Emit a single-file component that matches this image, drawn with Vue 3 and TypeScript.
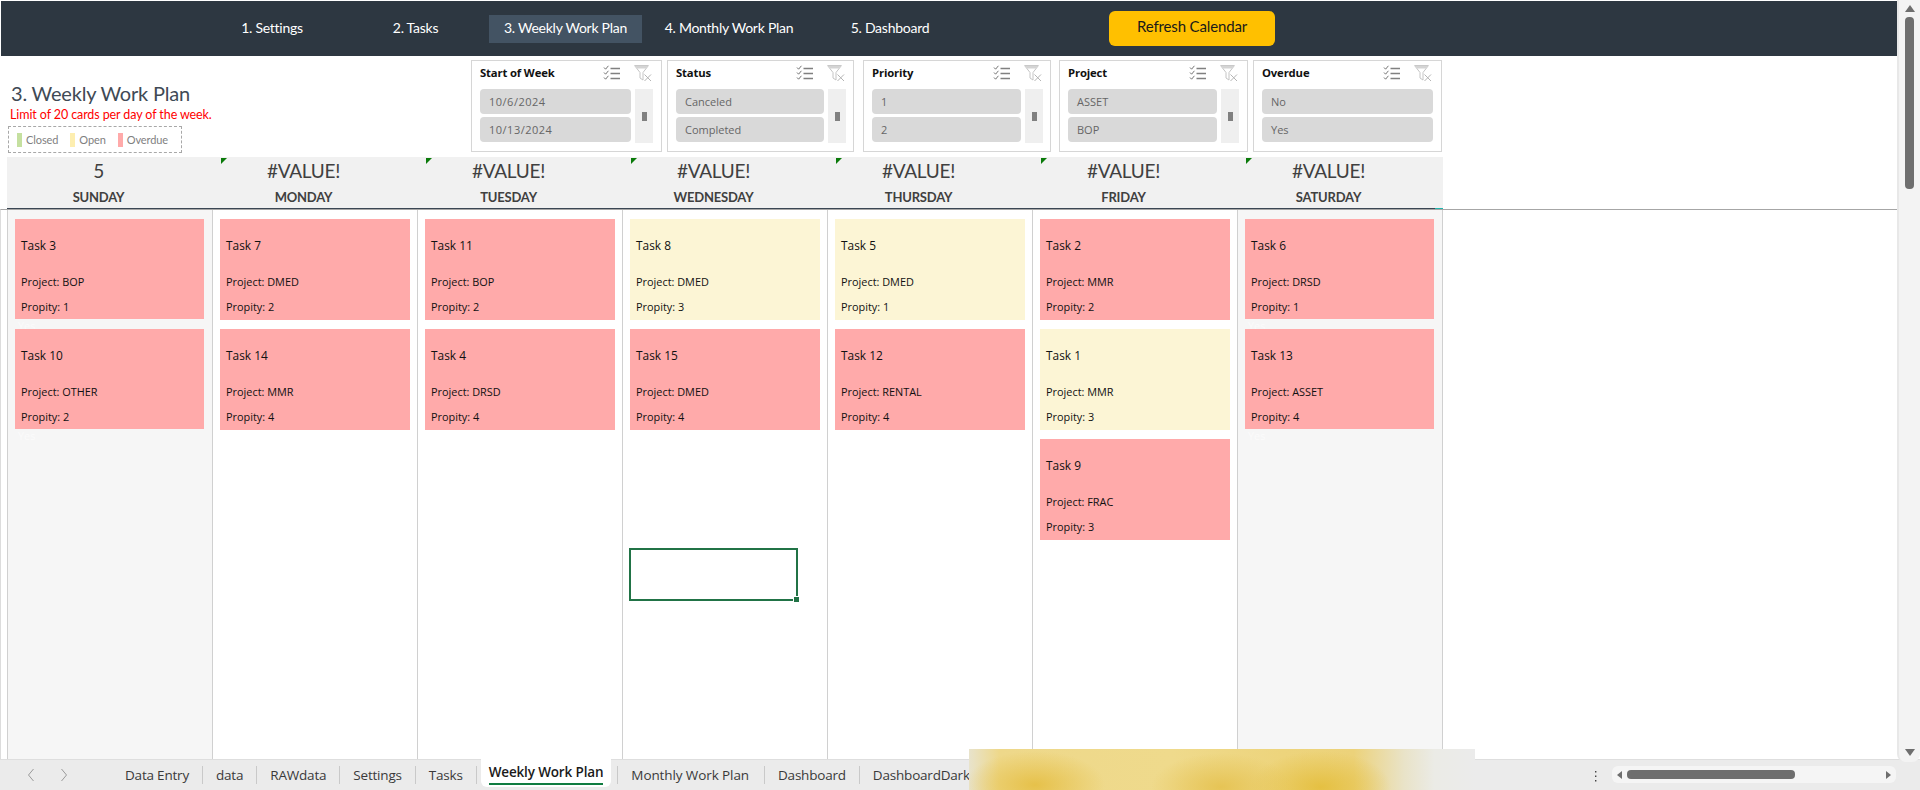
<template>
  <div class="app">
    <div class="main">
      <div class="sheet">
        <!-- nav bar -->
        <nav class="nav">
          <span></span>
          <a v-for="item in navItems" :key="item" class="nav-item" :class="{ active: item === activeNav }">{{ item }}</a>
          <span></span>
          <button class="refresh">Refresh Calendar</button>
        </nav>

        <!-- title and slicers -->
        <div class="top">
          <div class="title-block">
            <h1 class="title">3. Weekly Work Plan</h1>
            <p class="limit">Limit of 20 cards per day of the week.</p>
            <div class="legend">
              <span v-for="l in legend" :key="l.label" class="legend-item">
                <i class="swatch" :class="l.cls"></i>{{ l.label }}
              </span>
            </div>
          </div>
          <div class="filters">
            <div v-for="f in filters" :key="f.title" class="filter">
              <div class="filter-head">
                <span class="filter-title">{{ f.title }}</span>
                <svg class="ico-list" width="18" height="16" viewBox="0 0 18 16" fill="none">
                  <path d="M1 2.5 L2.6 4.2 L5.4 0.8 M1 7.5 L2.6 9.2 L5.4 5.8 M1 12.5 L2.6 14.2 L5.4 10.8" stroke="#666" stroke-width="0.9" />
                  <path d="M7.5 3.5 H17 M7.5 8.5 H17 M7.5 13.5 H17" stroke="#808080" stroke-width="1.3" />
                </svg>
                <svg class="ico-clear" width="18" height="17" viewBox="0 0 18 17" fill="none">
                  <path d="M0.6 0.6 H14.4 L9 7.5 V15 L6 13 V7.5 Z" stroke="#c4c4c4" stroke-width="1" fill="#fff" />
                  <path d="M1 1 H14 L12 3.6 H3 Z" fill="#d4d4d4" />
                  <path d="M10.5 9.5 L17 16 M17 9.5 L10.5 16" stroke="#b4b4b4" stroke-width="1" />
                </svg>
              </div>
              <div class="filter-body">
                <div class="filter-items">
                  <div v-for="o in f.options" :key="o" class="option">{{ o }}</div>
                </div>
                <div v-if="f.scroll" class="filter-scroll"><i></i></div>
              </div>
            </div>
          </div>
        </div>

        <!-- day headers -->
        <div class="days">
          <div v-for="(d, i) in days" :key="d.name" class="day-head">
            <i v-if="i > 0" class="corner"></i>
            <div class="day-num">{{ d.num }}</div>
            <div class="day-name">{{ d.name }}</div>
          </div>
          <i class="teal"></i>
        </div>

        <!-- board -->
        <div class="board-wrap">
          <div class="board">
            <div v-for="d in days" :key="d.name" class="col" :class="{ weekend: d.weekend }">
              <div v-for="c in d.cards" :key="c.task" class="card" :class="c.open ? 'open' : 'overdue'">
                <div class="card-title">{{ c.task }}</div>
                <div class="card-project">Project: {{ c.project }}</div>
                <div class="card-prio">Propity: {{ c.prio }}</div>
                <span v-if="d.weekend" class="ghost">Yes</span>
              </div>
            </div>
          </div>
          <div class="selection"><i></i></div>
        </div>
      </div>

      <!-- vertical scrollbar -->
      <div class="vscroll">
        <i class="arrow-up"></i>
        <div class="vthumb"></div>
        <i class="arrow-down"></i>
      </div>
    </div>

    <!-- sheet tabs -->
    <div class="tabs">
      <div class="tab-nav">
        <svg width="8" height="14" viewBox="0 0 8 14" fill="none"><path d="M6.5 1 L1.5 7 L6.5 13" stroke="#9a9a9a" /></svg>
        <svg width="8" height="14" viewBox="0 0 8 14" fill="none"><path d="M1.5 1 L6.5 7 L1.5 13" stroke="#9a9a9a" /></svg>
      </div>
      <div v-for="t in tabs" :key="t" class="tab" :class="{ current: t === activeTab }">
        <span>{{ t }}</span>
      </div>
      <div class="tab-spacer"></div>
      <svg class="dots" width="3" height="11" viewBox="0 0 3 11"><path d="M1 0h1.4v1.6H1zM1 4.5h1.4v1.6H1zM1 9h1.4v1.6H1z" fill="#444" /></svg>
      <div class="hscroll">
        <i class="arrow-left"></i>
        <div class="hthumb"></div>
        <i class="arrow-right"></i>
      </div>
    </div>

    <!-- blurred out part of the status bar -->
    <div class="smudge"></div>
  </div>
</template>

<script setup lang="ts">
interface Card {
  task: string
  project: string
  prio: number
  open?: boolean
}

interface Day {
  name: string
  num: string
  weekend?: boolean
  cards: Card[]
}

const activeNav = '3. Weekly Work Plan'
const navItems = ['1. Settings', '2. Tasks', '3. Weekly Work Plan', '4. Monthly Work Plan', '5. Dashboard']

const legend = [
  { label: 'Closed', cls: 'closed' },
  { label: 'Open', cls: 'open' },
  { label: 'Overdue', cls: 'late' }
]

const filters = [
  { title: 'Start of Week', options: ['10/6/2024', '10/13/2024'], scroll: true },
  { title: 'Status', options: ['Canceled', 'Completed'], scroll: true },
  { title: 'Priority', options: ['1', '2'], scroll: true },
  { title: 'Project', options: ['ASSET', 'BOP'], scroll: true },
  { title: 'Overdue', options: ['No', 'Yes'], scroll: false }
]

const days: Day[] = [
  {
    name: 'SUNDAY', num: '5', weekend: true,
    cards: [
      { task: 'Task 3', project: 'BOP', prio: 1 },
      { task: 'Task 10', project: 'OTHER', prio: 2 }
    ]
  },
  {
    name: 'MONDAY', num: '#VALUE!',
    cards: [
      { task: 'Task 7', project: 'DMED', prio: 2 },
      { task: 'Task 14', project: 'MMR', prio: 4 }
    ]
  },
  {
    name: 'TUESDAY', num: '#VALUE!',
    cards: [
      { task: 'Task 11', project: 'BOP', prio: 2 },
      { task: 'Task 4', project: 'DRSD', prio: 4 }
    ]
  },
  {
    name: 'WEDNESDAY', num: '#VALUE!',
    cards: [
      { task: 'Task 8', project: 'DMED', prio: 3, open: true },
      { task: 'Task 15', project: 'DMED', prio: 4 }
    ]
  },
  {
    name: 'THURSDAY', num: '#VALUE!',
    cards: [
      { task: 'Task 5', project: 'DMED', prio: 1, open: true },
      { task: 'Task 12', project: 'RENTAL', prio: 4 }
    ]
  },
  {
    name: 'FRIDAY', num: '#VALUE!',
    cards: [
      { task: 'Task 2', project: 'MMR', prio: 2 },
      { task: 'Task 1', project: 'MMR', prio: 3, open: true },
      { task: 'Task 9', project: 'FRAC', prio: 3 }
    ]
  },
  {
    name: 'SATURDAY', num: '#VALUE!', weekend: true,
    cards: [
      { task: 'Task 6', project: 'DRSD', prio: 1 },
      { task: 'Task 13', project: 'ASSET', prio: 4 }
    ]
  }
]

const activeTab = 'Weekly Work Plan'
const tabs = ['Data Entry', 'data', 'RAWdata', 'Settings', 'Tasks', 'Weekly Work Plan', 'Monthly Work Plan', 'Dashboard', 'DashboardDark']
</script>

<style>
html, body {
  margin: 0;
  overflow: hidden;
  background: #fff;
}
</style>

<style scoped>
.app {
  position: relative;
  width: 1920px;
  height: 790px;
  overflow: hidden;
  display: flex;
  flex-direction: column;
  font-family: Lato, "Open Sans", sans-serif;
}

.main {
  display: flex;
  height: 759px;
}

.sheet {
  width: 1897px;
  padding-top: 1px;
  box-sizing: border-box;
  display: flex;
  flex-direction: column;
  background: #fff;
}

/* nav */
.nav {
  height: 55px;
  margin-left: 1px;
  background: #2d3741;
  display: grid;
  grid-template-columns: 201px 140px 147px 153px 174px 148px 145px 166px;
  align-items: center;
}

.nav-item {
  height: 28px;
  line-height: 26px;
  margin-top: 1px;
  text-align: center;
  color: #fff;
  font-size: 14px;
  letter-spacing: -0.25px;
}

.nav-item.active {
  background: #435363;
}

.refresh {
  height: 35px;
  margin-top: -1px;
  border: none;
  border-radius: 6px;
  background: #ffc000;
  color: #1a1a1a;
  font-family: inherit;
  font-size: 15px;
  letter-spacing: -0.15px;
  padding: 0 0 4px;
}

/* title and slicers */
.top {
  display: flex;
  height: 101px;
}

.title-block {
  width: 471px;
  box-sizing: border-box;
  padding: 25px 0 0 8px;
}

.title {
  margin: 0 0 0 3px;
  font-weight: 400;
  font-size: 20px;
  line-height: 24px;
  color: #404a55;
  letter-spacing: -0.2px;
}

.limit {
  margin: 3px 0 0 2px;
  font-size: 12.5px;
  line-height: 14px;
  color: #ff0000;
  letter-spacing: -0.1px;
}

.legend {
  width: 174px;
  height: 27px;
  box-sizing: border-box;
  margin-top: 4px;
  border: 1px dashed #a8a8a8;
  display: flex;
  align-items: center;
  padding-left: 8px;
  font-size: 11px;
  color: #7f7f7f;
  letter-spacing: -0.1px;
}

.legend-item {
  display: flex;
  align-items: center;
  margin-right: 12px;
}

.swatch {
  width: 5px;
  height: 14px;
  margin-right: 4px;
}

.swatch.closed { background: #c5e0a0; }
.swatch.open { background: #fdeeb0; }
.swatch.late { background: #ffaaaa; }

.filters {
  display: flex;
  padding-top: 4px;
  height: 92px;
}

.filter {
  width: 191px;
  height: 92px;
  box-sizing: border-box;
  border: 1px solid #d6d6d6;
  padding: 0 8px;
  margin-right: 5px;
  font-family: "Open Sans", sans-serif;
}

.filter:nth-child(2) { width: 187px; margin-right: 9px; padding-right: 7px; }
.filter:nth-child(3) { width: 188px; margin-right: 8px; padding-right: 7px; }
.filter:nth-child(4) { width: 189px; margin-right: 5px; }
.filter:nth-child(5) { width: 189px; margin-right: 0; }

.filter:nth-child(1) .option {
  letter-spacing: 0.5px;
}

.filter-head {
  height: 23px;
  margin-bottom: 5px;
  display: flex;
  align-items: center;
}

.filter-title {
  flex: 1;
  font-size: 11.3px;
  font-weight: 700;
  color: #111;
  letter-spacing: -0.15px;
}

.ico-list {
  margin-right: 13px;
}

.ico-clear {
  margin-right: 1px;
  margin-top: 2px;
}

.filter-body {
  display: flex;
  gap: 4px;
}

.filter-items {
  flex: 1;
  display: flex;
  flex-direction: column;
  gap: 3px;
}

.option {
  height: 25px;
  line-height: 26px;
  border-radius: 4px;
  background: #d9d9d9;
  color: #666;
  font-size: 11px;
  padding-left: 9px;
}

.filter-scroll {
  width: 18px;
  height: 54px;
  background: #efefef;
  display: flex;
  align-items: center;
  justify-content: center;
}

.filter-scroll i {
  display: block;
  width: 5px;
  height: 9px;
  background: #808080;
}

/* day headers */
.days {
  position: relative;
  display: grid;
  grid-template-columns: repeat(7, 205px);
  width: 1436px;
  height: 52px;
  margin-left: 7px;
  background: #f1f1f1;
  border-bottom: 1px solid #3b4754;
  box-sizing: border-box;
}

.day-head {
  position: relative;
  padding-right: 22px;
  text-align: center;
  color: #404040;
}

.day-num {
  font-size: 19px;
  line-height: 24px;
  margin-top: 2px;
  letter-spacing: -0.3px;
}

.day-name {
  font-size: 13px;
  font-weight: 700;
  line-height: 16px;
  margin-top: 6px;
  letter-spacing: -0.2px;
}

.corner {
  position: absolute;
  left: 9px;
  top: 1px;
  width: 0;
  height: 0;
  border-top: 6px solid #0a7a0a;
  border-right: 6px solid transparent;
}

.teal {
  position: absolute;
  right: 0;
  bottom: -1px;
  width: 8px;
  height: 1px;
  background: #1fb5ad;
}

/* board */
.board-wrap {
  position: relative;
  flex: 1;
  min-height: 0;
  border-top: 1px solid #a6a6a6;
  border-left: 1px solid #dcdcdc;
}

.board {
  display: grid;
  grid-template-columns: repeat(7, 205px);
  width: 1436px;
  height: 100%;
  margin-left: 6px;
  border-right: 1px solid #d0d0d0;
  box-sizing: border-box;
}

.col {
  border-left: 1px solid #d0d0d0;
  padding: 9px 7px 0;
  display: flex;
  flex-direction: column;
  gap: 9px;
}

.col.weekend {
  background: #f6f6f6;
  padding-right: 8px;
  gap: 10px;
}

.card {
  position: relative;
  height: 101px;
  box-sizing: border-box;
  padding: 18px 0 0 6px;
  font-family: "Open Sans", sans-serif;
  color: #111;
  font-size: 10.9px;
  line-height: 16px;
}

.weekend .card {
  height: 100px;
}

.card.overdue { background: #ffaaaa; }
.card.open { background: #fcf5d5; }

.card-title { font-size: 11.9px; }
.card-project { margin-top: 21px; }
.card-prio { margin-top: 9px; }

.ghost {
  position: absolute;
  left: 3px;
  top: 100%;
  margin-top: -1px;
  color: #fbfbfb;
}

.selection {
  position: absolute;
  left: 628px;
  top: 338px;
  width: 169px;
  height: 53px;
  box-sizing: border-box;
  border: 2px solid #217346;
}

.selection i {
  position: absolute;
  right: -3px;
  bottom: -3px;
  width: 5px;
  height: 5px;
  background: #217346;
  border: 1px solid #fff;
  border-width: 1px 0 0 1px;
}

/* scrollbars */
.vscroll {
  width: 23px;
  height: 762px;
  box-sizing: border-box;
  border-left: 2px solid #e8e8e8;
  border-radius: 0 0 8px 8px;
  background: #f3f3f3;
  display: flex;
  flex-direction: column;
  align-items: center;
  padding: 5px 0 6px;
  z-index: 1;
}

.arrow-up {
  border-left: 5px solid transparent;
  border-right: 5px solid transparent;
  border-bottom: 7px solid #6e6e6e;
}

.vthumb {
  width: 9px;
  height: 172px;
  margin-top: 5px;
  border-radius: 4px;
  background: #6e6e6e;
}

.arrow-down {
  margin-top: auto;
  border-left: 5px solid transparent;
  border-right: 5px solid transparent;
  border-top: 7px solid #6e6e6e;
}

/* tabs */
.tabs {
  height: 31px;
  background: #ebebeb;
  border-top: 1px solid #dedede;
  box-sizing: border-box;
  display: flex;
  align-items: flex-start;
  font-family: "Open Sans", sans-serif;
  font-size: 13.5px;
  color: #3a3a3a;
}

.tab-nav {
  width: 112px;
  box-sizing: border-box;
  padding: 8px 0 0 27px;
  display: flex;
  gap: 25px;
}

.tab {
  height: 18px;
  margin-top: 6px;
  padding: 0 13px;
  line-height: 18px;
  border-right: 1px solid #c9c9c9;
  white-space: nowrap;
  letter-spacing: -0.2px;
}

.tab:last-of-type {
  border-right: none;
}

.tab.current {
  height: 28px;
  margin: -1px 6px 0 4px;
  padding: 3px 8px 0;
  background: #fff;
  border-right: none;
  border-radius: 0 0 6px 6px;
  box-sizing: border-box;
  color: #1a1a1a;
  font-weight: 600;
  line-height: 20px;
  letter-spacing: -0.15px;
}

.tab.current span {
  display: block;
  height: 21px;
  border-bottom: 2px solid #107c41;
}

.tab.current + .tab {
  border-left: 1px solid #c9c9c9;
  padding-right: 15px;
  letter-spacing: -0.1px;
}

.tab-spacer {
  flex: 1;
}

.dots {
  margin: 11px 15px 0 0;
}

.hscroll {
  width: 284px;
  height: 17px;
  margin: 6px 24px 0 0;
  border-radius: 6px;
  background: #f5f5f5;
  display: flex;
  align-items: center;
  padding: 0 5px;
  box-sizing: border-box;
}

.arrow-left {
  border-top: 4px solid transparent;
  border-bottom: 4px solid transparent;
  border-right: 5px solid #6e6e6e;
}

.hthumb {
  width: 168px;
  height: 9px;
  margin-left: 5px;
  border-radius: 4px;
  background: #6e6e6e;
}

.arrow-right {
  margin-left: auto;
  border-top: 4px solid transparent;
  border-bottom: 4px solid transparent;
  border-left: 5px solid #6e6e6e;
}

.smudge {
  position: absolute;
  left: 969px;
  top: 749px;
  width: 506px;
  height: 41px;
  background:
    radial-gradient(ellipse 70px 34px at 66px 36px, #e6c14a, rgba(230, 193, 74, 0)),
    radial-gradient(ellipse 70px 34px at 252px 38px, #e6c455, rgba(230, 196, 85, 0)),
    radial-gradient(ellipse 70px 36px at 352px 38px, #e5c042, rgba(229, 192, 66, 0)),
    linear-gradient(90deg, #e8e3cc 0, #eed88a 6%, #efda8c 40%, #edd47c 62%, #ecd27a 76%, #e9e3c8 86%, #ebebe6 92%, #ebebeb 100%);
}
</style>
